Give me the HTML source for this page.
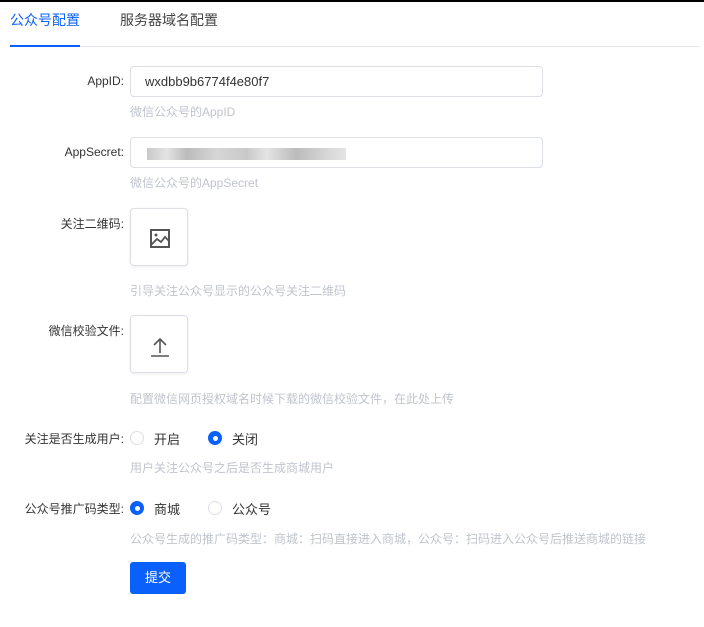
<!DOCTYPE html>
<html><head><meta charset="utf-8"><style>
*{box-sizing:border-box;margin:0;padding:0}
body{width:704px;height:627px;background:#fff;font-family:"Liberation Sans","Noto Sans CJK SC",sans-serif;font-size:13px;color:#333;position:relative;overflow:hidden;border-top:2px solid #000}
.a{position:absolute}
.lbl{position:absolute;right:580px;text-align:right;white-space:nowrap;color:#333;font-size:12px}
.tip{position:absolute;left:130px;color:#c0c4cc;font-size:12px;white-space:nowrap}
.inp{position:absolute;left:130px;width:413px;height:31px;border:1px solid #dcdfe6;border-radius:4px;padding-left:14px;line-height:29px}
.up{position:absolute;left:130px;width:58px;height:58px;border:1px solid #dcdfe6;border-radius:4px;box-shadow:0 1px 3px rgba(0,0,0,.08)}
.r{position:absolute;width:14px;height:14px;border-radius:50%;border:1px solid #dcdfe6}
.r.on{border:none;background:#0960fa}
.r.on:after{content:"";position:absolute;left:4.5px;top:4.5px;width:5px;height:5px;border-radius:50%;background:#fff}
</style></head><body>
<div class="a" style="left:10px;top:8px;font-size:14px;color:#0960fa">公众号配置</div>
<div class="a" style="left:120px;top:8px;font-size:14px;color:#444">服务器域名配置</div>
<div class="a" style="left:10px;top:44px;width:690px;height:1px;background:#e4e7ed"></div>
<div class="a" style="left:10px;top:43px;width:70px;height:2px;background:#0960fa"></div>

<div class="lbl" style="top:72px">AppID:</div>
<div class="inp" style="top:64px">wxdbb9b6774f4e80f7</div>
<div class="tip" style="top:101px">微信公众号的AppID</div>

<div class="lbl" style="top:143px">AppSecret:</div>
<div class="inp" style="top:135px"></div>
<div class="a" style="left:147px;top:146px;width:199px;height:12px;background:linear-gradient(90deg,#bbb,#ddd 10%,#aaa 20%,#ccc 35%,#bbb 50%,#ddd 60%,#aaa 75%,#ccc 90%,#ddd);opacity:.8"></div>
<div class="tip" style="top:172px">微信公众号的AppSecret</div>

<div class="lbl" style="top:213px">关注二维码:</div>
<div class="up" style="top:206px"><svg width="58" height="58" viewBox="0 0 58 58"><rect x="20" y="21" width="18" height="17" fill="none" stroke="#555" stroke-width="2"/><circle cx="25" cy="26" r="1.5" fill="#555"/><path d="M20 36l6-6 4 3 4-5 4 4" fill="none" stroke="#555" stroke-width="1.8"/></svg></div>
<div class="tip" style="top:280px">引导关注公众号显示的公众号关注二维码</div>

<div class="lbl" style="top:320px">微信校验文件:</div>
<div class="up" style="top:313px"><svg width="58" height="58" viewBox="0 0 58 58"><path d="M29 37V23M23 29l6-6 6 6M20 40h18" fill="none" stroke="#555" stroke-width="1.6"/></svg></div>
<div class="tip" style="top:388px">配置微信网页授权域名时候下载的微信校验文件，在此处上传</div>

<div class="lbl" style="top:428px">关注是否生成用户:</div>
<div class="r" style="left:130px;top:429px"></div><div class="a" style="left:154px;top:427px">开启</div>
<div class="r on" style="left:208px;top:429px"></div><div class="a" style="left:232px;top:427px">关闭</div>
<div class="tip" style="top:457px">用户关注公众号之后是否生成商城用户</div>

<div class="lbl" style="top:498px">公众号推广码类型:</div>
<div class="r on" style="left:130px;top:499px"></div><div class="a" style="left:154px;top:497px">商城</div>
<div class="r" style="left:208px;top:499px"></div><div class="a" style="left:232px;top:497px">公众号</div>
<div class="tip" style="top:528px">公众号生成的推广码类型：商城：扫码直接进入商城，公众号：扫码进入公众号后推送商城的链接</div>

<div class="a" style="left:130px;top:560px;width:56px;height:32px;background:#0960fa;border-radius:3px;color:#fff;text-align:center;line-height:32px">提交</div>
</body></html>
